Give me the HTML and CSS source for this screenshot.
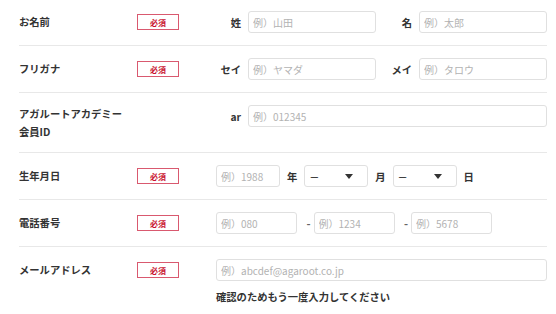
FILE: index.html
```html
<!DOCTYPE html>
<html lang="ja">
  <head>
    <meta charset="UTF-8" />
    <meta name="viewport" content="width=device-width, initial-scale=1.0" />
    <title>会員登録</title>
    <link rel="stylesheet" href="styles.css">
  </head>
  <body>
    <form class="form">
      <div class="row first">
        <div class="label">お名前</div>
        <div class="badge-cell"><span class="badge">必須</span></div>
        <div class="fields">
          <div class="pair">
            <span class="sub">姓</span>
            <input type="text" placeholder="例）山田" />
          </div>
          <div class="pair second">
            <span class="sub">名</span>
            <input type="text" placeholder="例）太郎" />
          </div>
        </div>
      </div>

      <div class="row">
        <div class="label">フリガナ</div>
        <div class="badge-cell"><span class="badge">必須</span></div>
        <div class="fields">
          <div class="pair">
            <span class="sub">セイ</span>
            <input type="text" placeholder="例）ヤマダ" />
          </div>
          <div class="pair second">
            <span class="sub">メイ</span>
            <input type="text" placeholder="例）タロウ" />
          </div>
        </div>
      </div>

      <div class="row top">
        <div class="label">アガルートアカデミー<br />会員ID</div>
        <div class="badge-cell"></div>
        <div class="fields">
          <div class="pair wide">
            <span class="sub">ar</span>
            <input type="text" placeholder="例）012345" />
          </div>
        </div>
      </div>

      <div class="row">
        <div class="label">生年月日</div>
        <div class="badge-cell"><span class="badge">必須</span></div>
        <div class="fields">
          <input class="year" type="text" placeholder="例）1988" />
          <span class="unit">年</span>
          <div class="select">
            <span>—</span>
            <svg width="8" height="5" viewBox="0 0 8 5"><path d="M0 0h8L4 5z" fill="#333"/></svg>
          </div>
          <span class="unit">月</span>
          <div class="select">
            <span>—</span>
            <svg width="8" height="5" viewBox="0 0 8 5"><path d="M0 0h8L4 5z" fill="#333"/></svg>
          </div>
          <span class="unit">日</span>
        </div>
      </div>

      <div class="row">
        <div class="label">電話番号</div>
        <div class="badge-cell"><span class="badge">必須</span></div>
        <div class="fields">
          <input class="tel" type="text" placeholder="例）080" />
          <span class="dash">-</span>
          <input class="tel" type="text" placeholder="例）1234" />
          <span class="dash">-</span>
          <input class="tel" type="text" placeholder="例）5678" />
        </div>
      </div>

      <div class="row top last">
        <div class="label single">メールアドレス</div>
        <div class="badge-cell"><span class="badge">必須</span></div>
        <div class="fields column">
          <input type="text" placeholder="例）abcdef@agaroot.co.jp" />
          <p class="note">確認のためもう一度入力してください</p>
        </div>
      </div>
    </form>
  </body>
</html>
```

FILE: styles.css
```css
body {
  margin: 0;
  font-family: "Noto Sans CJK JP", "Noto Sans", sans-serif;
  color: #333;
  background: #fff;
}
.form {
  width: 528px;
  margin-left: 19px;
}
.row {
  display: flex;
  align-items: center;
  padding: 12px 0;
  border-bottom: 1px solid #e8e8e8;
}
.row.first {
  padding-top: 11px;
}
.row.top {
  align-items: flex-start;
}
.row.last {
  border-bottom: none;
}
.label {
  width: 118px;
  font-size: 10.3px;
  font-weight: bold;
  line-height: 17.5px;
}
.label.single {
  line-height: 22px;
}
.badge-cell {
  width: 79px;
  flex-shrink: 0;
}
.row.last .badge-cell {
  padding-top: 3px;
}
.badge {
  display: flex;
  justify-content: center;
  align-items: center;
  width: 42px;
  height: 16px;
  box-sizing: border-box;
  border: 1px solid #d9596f;
  color: #c8102e;
  font-size: 8px;
  font-weight: bold;
}
.fields {
  flex: 1;
  display: flex;
  align-items: center;
}
.fields.column {
  flex-direction: column;
  align-items: stretch;
}
.pair {
  display: flex;
  align-items: center;
  width: 160px;
}
.pair.second {
  margin-left: 11px;
}
.pair.wide {
  flex: 1;
}
.sub {
  width: 25px;
  margin-right: 7px;
  text-align: right;
  font-size: 10.3px;
  font-weight: bold;
  flex-shrink: 0;
}
input {
  height: 22px;
  width: 100%;
  box-sizing: border-box;
  padding: 0 4px;
  border: 1px solid #e0e0e0;
  border-radius: 3px;
  font-family: inherit;
  font-size: 10px;
  color: #333;
}
input::placeholder {
  color: #b2b2b2;
}
.year {
  width: 64px;
}
.unit {
  margin: 0 7px;
  font-size: 10.3px;
  font-weight: bold;
}
.select {
  display: flex;
  align-items: center;
  justify-content: space-between;
  width: 64px;
  height: 22px;
  box-sizing: border-box;
  padding: 0 14px 0 5px;
  border: 1px solid #e0e0e0;
  border-radius: 3px;
  font-size: 9px;
  font-weight: bold;
}
.tel {
  width: 81px;
}
.dash {
  width: 16.5px;
  flex-shrink: 0;
  box-sizing: border-box;
  padding-right: 3px;
  text-align: right;
  font-size: 11px;
  font-weight: bold;
  color: #666;
}
.note {
  margin: 8px 0 0;
  font-size: 10.3px;
  font-weight: bold;
  line-height: 15px;
}
```
